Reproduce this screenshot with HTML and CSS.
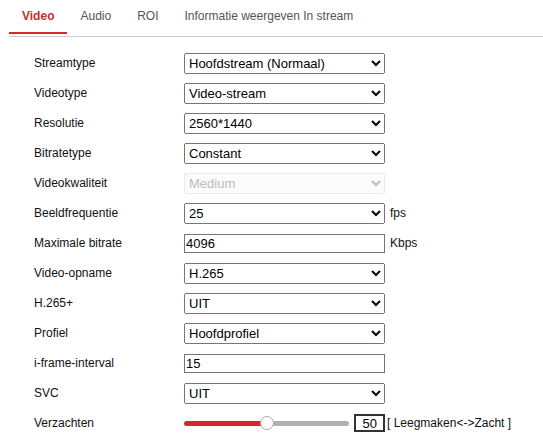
FILE: index.html
```html
<!DOCTYPE html>
<html>
<head>
<meta charset="utf-8">
<link rel="stylesheet" href="styles.css">
</head>
<body>
<div class="tabs">
  <div class="tab active">Video</div>
  <div class="tab">Audio</div>
  <div class="tab">ROI</div>
  <div class="tab">Informatie weergeven In stream</div>
</div>
<div class="form">
  <div class="row"><span class="label">Streamtype</span><select class="field"><option>Hoofdstream (Normaal)</option></select></div>
  <div class="row"><span class="label">Videotype</span><select class="field"><option>Video-stream</option></select></div>
  <div class="row"><span class="label">Resolutie</span><select class="field"><option>2560*1440</option></select></div>
  <div class="row"><span class="label">Bitratetype</span><select class="field"><option>Constant</option></select></div>
  <div class="row"><span class="label">Videokwaliteit</span><select class="field" disabled><option>Medium</option></select></div>
  <div class="row"><span class="label">Beeldfrequentie</span><select class="field"><option>25</option></select><span class="unit">fps</span></div>
  <div class="row"><span class="label">Maximale bitrate</span><input class="field text" type="text" value="4096"><span class="unit">Kbps</span></div>
  <div class="row"><span class="label">Video-opname</span><select class="field"><option>H.265</option></select></div>
  <div class="row"><span class="label">H.265+</span><select class="field"><option>UIT</option></select></div>
  <div class="row"><span class="label">Profiel</span><select class="field"><option>Hoofdprofiel</option></select></div>
  <div class="row"><span class="label">i-frame-interval</span><input class="field text" type="text" value="15"></div>
  <div class="row"><span class="label">SVC</span><select class="field"><option>UIT</option></select></div>
  <div class="row"><span class="label">Verzachten</span>
    <div class="slider-wrap">
      <input class="slider" type="range" min="0" max="100" value="50">
      <input class="num" type="text" value="50">
      <span class="hint">[ Leegmaken&lt;-&gt;Zacht ]</span>
    </div>
  </div>
</div>
</body>
</html>
```
FILE: styles.css
```css
html, body {
  margin: 0;
  padding: 0;
  background: #fff;
  font-family: "Liberation Sans", Arial, sans-serif;
}
.tabs {
  display: flex;
  margin-left: 9px;
  border-bottom: 1px solid #cfcfcf;
  height: 36px;
}
.tab {
  padding: 0 13px;
  font-size: 12px;
  color: #555;
  line-height: 33px;
  height: 34px;
  box-sizing: border-box;
  border-bottom: 2px solid transparent;
}
.tab.active {
  color: #d0282e;
  font-weight: bold;
  border-bottom-color: #d0282e;
}
.form {
  padding-top: 11px;
}
.row {
  display: flex;
  align-items: center;
  height: 30px;
}
.label {
  width: 150px;
  padding-left: 34px;
  font-size: 12px;
  color: #111;
}
.field {
  width: 201px;
  height: 21px;
  margin: 0;
  font-family: "Liberation Sans", Arial, sans-serif;
  font-size: 13px;
  color: #000;
  box-sizing: border-box;
}
.field:disabled {
  color: #a0a0a0;
  border: 1px solid #e2e2e2;
  border-radius: 2px;
  background-color: #fafafa;
}
.field.text {
  height: 19px;
  border: 1px solid #767676;
  padding: 1px 1px;
}
.unit {
  font-size: 12px;
  color: #111;
  margin-left: 5px;
}
.slider-wrap {
  display: flex;
  align-items: center;
}
.slider {
  -webkit-appearance: none;
  appearance: none;
  width: 165px;
  height: 5px;
  margin: 0;
  border-radius: 3px;
  background: linear-gradient(to right, #d0282e 0, #d0282e 50%, #b0b0b0 50%, #b0b0b0 100%);
  outline: none;
}
.slider::-webkit-slider-thumb {
  -webkit-appearance: none;
  appearance: none;
  width: 14px;
  height: 14px;
  border-radius: 50%;
  background: #fff;
  border: 1px solid #aaa;
  box-sizing: border-box;
}
.num {
  width: 31px;
  height: 18px;
  box-sizing: border-box;
  margin: 0 0 0 5px;
  border: 2px solid #333;
  padding: 0 6px 0 0;
  text-align: right;
  font-family: "Liberation Sans", Arial, sans-serif;
  font-size: 13px;
  color: #000;
}
.hint {
  font-size: 12px;
  color: #111;
  margin-left: 2px;
}
```
